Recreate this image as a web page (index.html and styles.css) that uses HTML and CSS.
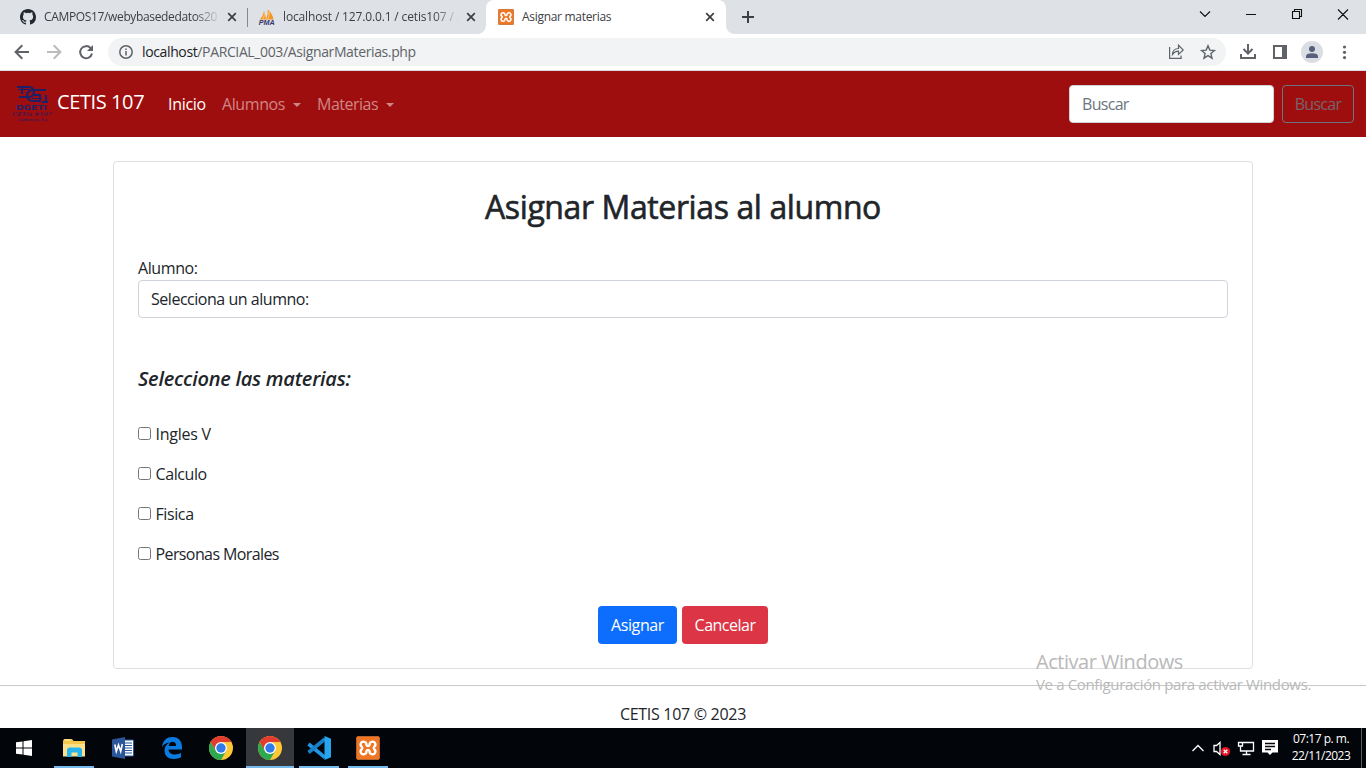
FILE: index.html
```html
<!DOCTYPE html>
<html lang="es">
<head>
<meta charset="utf-8">
<title>Asignar materias</title>
<link rel="stylesheet" href="styles.css">
</head>
<body>
<svg width="0" height="0" class="defs">
  <symbol id="xampp" viewBox="0 0 24 24">
    <rect x=".5" y=".5" width="23" height="23" rx="1.5" fill="#ee7625" stroke="#b9622b"/>
    <path d="M10.400 9A2.900 2.900 0 1 0 6 11Q6.800 12 6 13A2.900 2.900 0 1 0 10.400 15Q12 12.800 13.600 15A2.900 2.900 0 1 0 18 13Q17.200 12 18 11A2.900 2.900 0 1 0 13.600 9Q12 11.200 10.400 9Z" fill="none" stroke="#fff" stroke-width="2.300"/>
    <path d="M8.800 9.500v5M15.200 9.500v5M9 12h6" stroke="#ee7625" stroke-width="1.300"/>
  </symbol>
  <symbol id="chrome" viewBox="0 0 24 24">
    <circle cx="12" cy="12" r="12" fill="#fcc934"/>
    <path d="M12 6h10.390A12 12 0 0 0 1.610 6L6.800 15z" fill="#e33b2e"/>
    <path d="M1.610 6A12 12 0 0 0 12 24l5.200-9L12 17.500 6.800 15z" fill="#2da94f"/>
    <circle cx="12" cy="12" r="6" fill="#fff"/>
    <circle cx="12" cy="12" r="4.700" fill="#2f7bea"/>
  </symbol>
  <symbol id="close" viewBox="0 0 10 10"><path d="M1.200 1.200l7.600 7.600M8.800 1.200L1.200 8.800" stroke="#3c4043" stroke-width="1.700"/></symbol>
</svg>

<div class="tabs">
  <div class="tab tab-one">
    <svg class="favicon" viewBox="0 0 16 16"><path fill="#24292f" d="M8 0C3.580 0 0 3.580 0 8c0 3.540 2.290 6.530 5.470 7.590.4.070.55-.17.55-.38 0-.19-.01-.82-.01-1.490-2.010.37-2.530-.49-2.690-.94-.09-.23-.48-.94-.82-1.130-.28-.15-.68-.52-.01-.53.63-.01 1.080.58 1.230.82.72 1.210 1.870.87 2.330.66.07-.52.28-.87.51-1.070-1.780-.2-3.640-.89-3.640-3.950 0-.87.31-1.590.82-2.150-.08-.2-.36-1.020.08-2.120 0 0 .67-.21 2.200.82a7.700 7.700 0 0 1 4 0c1.530-1.040 2.200-.82 2.200-.82.44 1.100.16 1.920.08 2.120.51.560.82 1.270.82 2.150 0 3.070-1.870 3.750-3.650 3.950.29.25.54.73.54 1.480 0 1.070-.01 1.930-.01 2.200 0 .21.15.46.55.38A8 8 0 0 0 16 8c0-4.420-3.580-8-8-8z"/></svg>
    <span class="tab-title faded t1">CAMPOS17/webybasededatos20</span>
    <svg class="tab-x"><use href="#close"/></svg>
  </div>
  <div class="tab tab-two">
    <svg class="favicon" viewBox="0 0 16 16"><path d="M1 10.500Q4 7 5 2q2 4 1.800 8.500zM7 10.500Q9.500 5 8.800.500q5 4.500 5.700 10z" fill="#f7941d"/><path d="M4 10q1.600-3 1.300-6M9 10.500q1.500-4 1-8" stroke="#fbc98a" fill="none"/><text class="pma" x="-.2" y="15.800" textLength="16" lengthAdjust="spacingAndGlyphs">PMA</text></svg>
    <span class="tab-title faded t2">localhost / 127.0.0.1 / cetis107 / a</span>
    <svg class="tab-x"><use href="#close"/></svg>
  </div>
  <div class="tab tab-active">
    <svg class="favicon"><use href="#xampp"/></svg>
    <span class="tab-title t3">Asignar materias</span>
    <svg class="tab-x"><use href="#close"/></svg>
  </div>
  <svg class="tab-plus" viewBox="0 0 12 12"><path d="M6 0v12M0 6h12" stroke="#3c4043" stroke-width="2"/></svg>
  <svg class="window-controls" width="160" height="34" fill="none" stroke="#111" stroke-width="1.100"><path d="M0 11.500l5 5 5-5M46 14.500h10M92.500 11.500h7v7h-7zM94.500 11.500v-2h7v7h-2M138 9.500l10 10M148 9.500l-10 10"/></svg>
</div>

<div class="toolbar">
  <svg class="nav-icons" width="100" height="36" fill="none" stroke="#5f6368" stroke-width="2"><path d="M29 18H16M22.300 11.300L15.600 18l6.700 6.700"/><path stroke="#babcbe" d="M47 18h13M53.700 11.300l6.700 6.700-6.700 6.700"/><path d="M90.700 14.200A6 6 0 1 0 92 19.500"/><path d="M93 11v6h-6z" fill="#5f6368" stroke="none"/></svg>
  <div class="address">
    <svg class="info" viewBox="0 0 14 14"><circle cx="7" cy="7" r="6.200" fill="none" stroke="#5f6368" stroke-width="1.500"/><path d="M7 6v4.500M7 3.400v1.600" stroke="#5f6368" stroke-width="1.500"/></svg>
    <span class="url"><b>localhost</b>/PARCIAL_003/AsignarMaterias.php</span>
    <svg class="address-icons" width="48" height="28" fill="none" stroke="#5f6368" stroke-width="1.200"><path d="M1.600 9v11.400h11.500v-3M4.500 16.500q.3-6 6-6V7.300l4.700 4.600-4.700 4.500v-3.200q-3.600-.2-6 3.300z"/><path stroke-width="1.400" d="M40 7.800l1.800 4.300 4.600.4-3.500 3.100 1.100 4.600-4-2.500-4 2.500 1.100-4.600-3.500-3.100 4.600-.4z"/></svg>
  </div>
  <svg class="tool-icons" width="132" height="36"><path d="M14 10v9M9.500 15l4.500 4.500 4.500-4.500M7 20v4h14v-4" fill="none" stroke="#5f6368" stroke-width="2"/><path d="M40 12h12v12H40z" fill="none" stroke="#5f6368" stroke-width="2"/><path d="M48 11h5v14h-5z" fill="#5f6368"/><circle cx="78" cy="18" r="11" fill="#dadde4"/><circle cx="78" cy="15" r="3" fill="#56607a"/><path d="M72 24v-1.500q0-3.300 6-3.300t6 3.300V24z" fill="#56607a"/><g fill="#5f6368"><circle cx="110.500" cy="13" r="1.600"/><circle cx="110.500" cy="18.300" r="1.600"/><circle cx="110.500" cy="23.600" r="1.600"/></g></svg>
</div>

<nav class="navbar">
  <svg class="logo" viewBox="0 0 40 40"><g fill="none" stroke="#1c2069" stroke-width="2"><path d="M5 3h11q6 0 6 5t-6 5H7M10 3v7M34 6H22q-7 0-7 5.500t7 5.500h6v-6h-6M34 11v7M30 18h6"/><path d="M6 5.500h12M20 14.500h10" stroke-width="1"/></g><text x="4" y="25.500" class="logo-a" textLength="31" lengthAdjust="spacingAndGlyphs">DGETI</text><text x="0" y="32" class="logo-b" textLength="40" lengthAdjust="spacingAndGlyphs">CETis #107</text><text x="6" y="37" class="logo-c" textLength="31" lengthAdjust="spacingAndGlyphs">Cadereyta, N.L.</text></svg>
  <a class="brand">CETIS 107</a>
  <a class="link current inicio">Inicio</a>
  <a class="link drop alumnos">Alumnos</a>
  <a class="link drop materias">Materias</a>
  <input class="search" type="text" placeholder="Buscar">
  <button class="btn search-btn">Buscar</button>
</nav>

<main class="page">
  <form class="card">
    <h2 class="title">Asignar Materias al alumno</h2>
    <label class="label">Alumno:</label>
    <div class="select">Selecciona un alumno:</div>
    <h5 class="subtitle">Seleccione las materias:</h5>
    <label class="check"><input type="checkbox"><span class="short">Ingles V</span></label>
    <label class="check"><input type="checkbox"><span>Calculo</span></label>
    <label class="check"><input type="checkbox"><span>Fisica</span></label>
    <label class="check"><input type="checkbox"><span class="long">Personas Morales</span></label>
    <div class="actions">
      <button class="btn primary" type="button">Asignar</button>
      <button class="btn danger" type="button">Cancelar</button>
    </div>
  </form>
  <footer class="footer">CETIS 107 © 2023</footer>
  <div class="watermark"><div class="wm-title">Activar Windows</div><div class="wm-text">Ve a Configuración para activar Windows.</div></div>
</main>

<div class="taskbar">
  <div class="task start"><svg width="16" height="16" fill="#fff"><path d="M0 2.300l6.500-.9v6.100H0zM7.500 1.200L16 0v7.500H7.500zM0 8.500h6.500v6.100L0 13.700zM7.500 8.500H16V16l-8.500-1.200z"/></svg></div>
  <div class="task open"><svg width="22" height="20"><path d="M1 1h8l1.500 2H22v15H0V3z" fill="#f5c84c"/><path d="M0 6h22v12.500H0z" fill="#ffe08a"/><path d="M2 2h5" stroke="#fff3c4"/><path d="M4 19v-8l2-1.500h11l2 1.500v8h-4.500v-4.500h-6V19z" fill="#28b5ef"/></svg></div>
  <div class="task"><svg width="22" height="22"><path d="M12 3h9.500v16H12z" fill="#fff" stroke="#2b579a"/><path d="M13 6h7M13 8.500h7M13 11h7M13 13.500h7M13 16h7" stroke="#2b579a"/><path d="M0 2.500L13 0v22L0 19.500z" fill="#2b579a"/><path d="M2.800 7.500l1.500 7 2.200-6.500 2.200 6.500 1.600-7.500" fill="none" stroke="#fff" stroke-width="1.600"/></svg></div>
  <div class="task"><svg width="20" height="22"><path d="M0 10C1 3 5 0 10.500 0 17 0 20 4.800 20 10v2.500H6.500c.3 3.500 3 5 6.500 5 2.500 0 4.500-.8 6-1.700v4.500C17 21.500 14.500 22 12 22 6 22 2.500 18.500 2.500 13.500 2.500 10 4.500 7 7.500 5.500 4 6 1.500 7.500 0 10zm6.700-1h7.400c0-3-1.500-4.300-3.600-4.300S7.200 6 6.700 9z" fill="#0a7be0" fill-rule="evenodd"/></svg></div>
  <div class="task"><svg width="24" height="24"><use href="#chrome"/></svg></div>
  <div class="task open focused"><svg width="24" height="24"><use href="#chrome"/></svg></div>
  <div class="task open"><svg width="24" height="24"><path d="M1.500 8L18 21.500" stroke="#2196e3" stroke-width="3.600"/><path d="M1.500 16.500L18 3" stroke="#1780c9" stroke-width="3.600"/><path d="M17.500 0L24 2.800v18.400L17.500 24z" fill="#27a5ee"/></svg></div>
  <div class="task open"><svg width="24" height="24"><use href="#xampp"/></svg></div>
  <svg class="tray" width="90" height="40" fill="none" stroke="#fff" stroke-width="1.300"><path d="M2.500 23l5.500-5.500 5.500 5.500M24 17.500h2.500l3.500-3v12l-3.500-3H24z"/><circle cx="35.500" cy="23.500" r="4.600" fill="#e81123" stroke="none"/><path d="M33.700 21.700l3.600 3.600M37.300 21.700l-3.600 3.600"/><path d="M53 14.500h10.500v8.500H50.500v-3M48.500 14.500h4v3.500h-4zM50.500 18v3M56.500 23v3M52.500 26.500h8"/><path d="M72 12h16v12.500h-5.500L80 27l-2.500-2.500H72z" fill="#fff" stroke="none"/><path d="M75 15.500h10M75 18.500h10M75 21.500h6" stroke="#05070b"/></svg>
  <div class="clock"><div class="time">07:17 p. m.</div><div class="date">22/11/2023</div></div>
  <div class="peek"></div>
</div>
</body>
</html>
```
FILE: styles.css
```css
* { box-sizing: border-box; }
body {
  margin: 0;
  width: 1366px;
  height: 768px;
  overflow: hidden;
  display: flex;
  flex-direction: column;
  font: 16px/24px "Open Sans", "Noto Sans", sans-serif;
  letter-spacing: -.4px;
  color: #212529;
  background: #fff;
  white-space: nowrap;
}
svg { display: block; flex: none; overflow: visible; letter-spacing: 0; }
.defs { position: absolute; }
button, input { font: inherit; margin: 0; letter-spacing: inherit; }

/* Browser tabs */
.tabs { height: 34px; background: #dee1e6; display: flex; align-items: center; font-size: 12px; letter-spacing: -.3px; color: #3c4043; }
.tab { height: 34px; display: flex; align-items: center; }
.tab-one { width: 248px; padding-left: 20px; border-right: 1px solid transparent; background: linear-gradient(#85888d, #85888d) 247px 8px / 1px 19px no-repeat border-box; }
.tab-two { width: 238px; padding-left: 11px; }
.tab-active { width: 240px; padding-left: 12px; background: #fff; border-radius: 8px 8px 0 0; position: relative; }
.tab-active::before, .tab-active::after { content: ""; position: absolute; bottom: 0; width: 8px; height: 8px; }
.tab-active::before { left: -8px; background: radial-gradient(circle at 0 0, transparent 7.5px, #fff 8px); }
.tab-active::after { right: -8px; background: radial-gradient(circle at 100% 0, transparent 7.5px, #fff 8px); }
.favicon { width: 16px; height: 16px; margin-right: 8px; }
.tab-title { width: 175px; line-height: 20px; }
.t1 { letter-spacing: -.35px; }
.t2 { letter-spacing: -.15px; }
.faded { -webkit-mask-image: linear-gradient(90deg, #000 150px, transparent 177px); mask-image: linear-gradient(90deg, #000 150px, transparent 177px); }
.tab-x { width: 10px; height: 10px; margin-left: 8px; }
.pma { font: italic bold 6.5px "Liberation Sans", sans-serif; fill: #33376a; }
.tab-plus { width: 12px; height: 12px; margin-left: 16px; }
.window-controls { margin-left: auto; margin-right: 6px; }

/* Address bar */
.toolbar { height: 37px; background: #fff; border-bottom: 1px solid #dadce0; display: flex; align-items: center; }
.nav-icons { margin-right: 8px; }
.address { width: 1118px; height: 28px; border-radius: 14px; background: #f1f3f4; display: flex; align-items: center; padding-left: 11px; color: #5f6368; font-size: 14px; letter-spacing: -.37px; }
.info { width: 14px; height: 14px; margin-right: 9px; }
.url b { font-weight: 400; color: #202124; }
.address-icons { margin-left: auto; margin-right: 10px; }
.tool-icons { margin-left: 8px; }

/* Site navigation */
.navbar { height: 66px; background: #9f0e0e; display: flex; align-items: center; padding: 0 12px; color: #fff; }
.logo { width: 40px; height: 40px; }
.logo-a { font: bold 7px "DejaVu Sans", sans-serif; fill: #25206a; }
.logo-b { font: italic bold 5px "DejaVu Serif", serif; fill: #4b1747; }
.logo-c { font: bold 3.500px "DejaVu Sans", sans-serif; fill: #4b1747; }
.brand { font-size: 20px; line-height: 30px; width: 111px; padding-left: 5px; margin-top: -5px; }
.link { color: #cf8686; }
.current { color: #fff; }
.inicio { width: 54px; margin-left: 5px; letter-spacing: -.3px; }
.drop { display: flex; align-items: center; }
.drop::after { content: ""; border: 4.800px solid transparent; border-top-color: currentColor; border-bottom: 0; margin: 1px 0 0 8px; }
.alumnos { width: 95px; }
.materias { letter-spacing: -.5px; }
.search { width: 205px; height: 38px; margin-left: auto; padding: 6px 12px; border: 1px solid #ced4da; border-radius: 4px; background: #fff; color: #212529; letter-spacing: -.7px; }
.search::placeholder { color: #6c757d; opacity: 1; }
.btn { height: 38px; border: 1px solid transparent; border-radius: 4px; padding: 0; color: #fff; line-height: 24px; text-align: center; }
.search-btn { width: 72px; margin-left: 8px; border-color: #6c757d; background: none; color: #77636b; letter-spacing: -.7px; }

/* Assignment form */
.page { height: 591px; position: relative; }
.card { width: 1140px; height: 508px; margin: 24px auto 16px; padding: 24px; border: 1px solid #dfdfdf; border-radius: 4px; }
.title { margin: 0 0 31px; padding-top: 2px; font-size: 32px; line-height: 38px; font-weight: 400; -webkit-text-stroke: .6px #212529; text-align: center; }
.label { display: block; height: 23px; line-height: 23px; }
.select { height: 38px; padding: 6px 12px; border: 1px solid #ced4da; border-radius: 4px; letter-spacing: -.47px; }
.subtitle { margin: 49px 0 31px; font-size: 20px; line-height: 24px; font-weight: 600; font-style: italic; letter-spacing: -.25px; }
.check { display: flex; height: 24px; margin-bottom: 16px; }
.check input { width: 13px; height: 13px; margin: 5px 4.500px 0 0; }
.short { letter-spacing: -.25px; }
.long { letter-spacing: -.6px; }
.actions { display: flex; justify-content: center; gap: 5px; padding-top: 24px; }
.primary { width: 79px; background: #0d6efd; }
.danger { width: 86px; background: #dc3545; letter-spacing: -.5px; }
.footer { border-top: 1px solid #c8c9ca; padding-top: 16px; text-align: center; letter-spacing: -.3px; }
.watermark { position: absolute; left: 1036px; top: 512px; color: #b9b9b9; }
.wm-title { font-size: 20px; line-height: 26px; letter-spacing: -.48px; }
.wm-text { font-size: 15px; line-height: 18px; letter-spacing: -.35px; }

/* Windows taskbar */
.taskbar { height: 40px; background: #02050a; display: flex; align-items: center; color: #fff; }
.task { width: 49px; height: 40px; display: flex; align-items: center; justify-content: center; }
.start { width: 48px; margin-right: 1px; }
.open { background: linear-gradient(#76b9ed, #76b9ed) center bottom / 40px 2px no-repeat; }
.focused { background: linear-gradient(#76b9ed, #76b9ed) bottom / 48px 2px no-repeat, linear-gradient(#37383c, #37383c) center / 48px 40px no-repeat; }
.tray { margin-left: auto; }
.clock { width: 80px; height: 36px; margin-left: 1px; font-size: 12px; line-height: 17px; letter-spacing: -.5px; text-align: center; }
.peek { width: 5px; height: 40px; border-left: 1px solid #5a5c60; }
```
